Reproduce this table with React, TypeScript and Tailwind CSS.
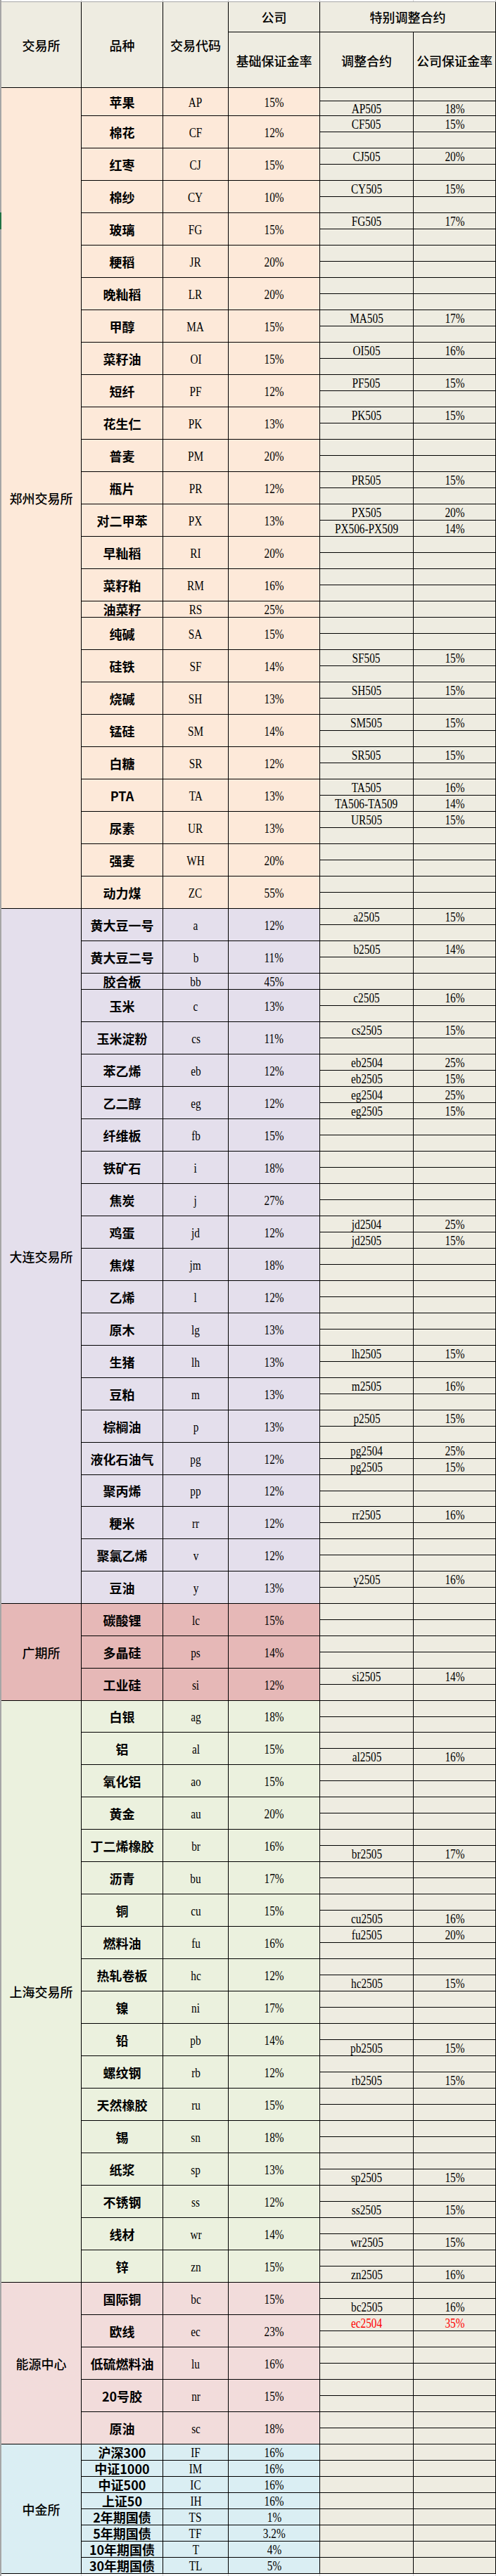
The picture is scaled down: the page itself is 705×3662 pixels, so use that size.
import React from "react";

type Sub = [string, string, boolean?] | null;
type Row = { n: string; c: string; r: string; s?: Sub[]; k?: "f" | "s" | "t" };
type Sec = { name: string; bg: string; rows: Row[] };

const LAT = "inline-block whitespace-nowrap font-['Liberation_Serif',serif] text-[18px] leading-none scale-x-[0.85]";
const CJK = "inline-block whitespace-nowrap font-['Noto_Sans_CJK_SC',sans-serif] text-[18px] leading-none";

const sections: Sec[] = [
  {
    name: "郑州交易所",
    bg: "bg-[#fde9d9]",
    rows: [
      { n: "苹果", c: "AP", r: "15%", k: "f", s: [null, ["AP505", "18%"]] },
      { n: "棉花", c: "CF", r: "12%", s: [["CF505", "15%"], null] },
      { n: "红枣", c: "CJ", r: "15%", s: [["CJ505", "20%"], null] },
      { n: "棉纱", c: "CY", r: "10%", s: [["CY505", "15%"], null] },
      { n: "玻璃", c: "FG", r: "15%", s: [["FG505", "17%"], null] },
      { n: "粳稻", c: "JR", r: "20%" },
      { n: "晚籼稻", c: "LR", r: "20%" },
      { n: "甲醇", c: "MA", r: "15%", s: [["MA505", "17%"], null] },
      { n: "菜籽油", c: "OI", r: "15%", s: [["OI505", "16%"], null] },
      { n: "短纤", c: "PF", r: "12%", s: [["PF505", "15%"], null] },
      { n: "花生仁", c: "PK", r: "13%", s: [["PK505", "15%"], null] },
      { n: "普麦", c: "PM", r: "20%" },
      { n: "瓶片", c: "PR", r: "12%", s: [["PR505", "15%"], null] },
      { n: "对二甲苯", c: "PX", r: "13%", s: [["PX505", "20%"], ["PX506-PX509", "14%"]] },
      { n: "早籼稻", c: "RI", r: "20%" },
      { n: "菜籽粕", c: "RM", r: "16%" },
      { n: "油菜籽", c: "RS", r: "25%", k: "s" },
      { n: "纯碱", c: "SA", r: "15%" },
      { n: "硅铁", c: "SF", r: "14%", s: [["SF505", "15%"], null] },
      { n: "烧碱", c: "SH", r: "13%", s: [["SH505", "15%"], null] },
      { n: "锰硅", c: "SM", r: "14%", s: [["SM505", "15%"], null] },
      { n: "白糖", c: "SR", r: "12%", s: [["SR505", "15%"], null] },
      { n: "PTA", c: "TA", r: "13%", s: [["TA505", "16%"], ["TA506-TA509", "14%"]] },
      { n: "尿素", c: "UR", r: "13%", s: [["UR505", "15%"], null] },
      { n: "强麦", c: "WH", r: "20%" },
      { n: "动力煤", c: "ZC", r: "55%" },
    ],
  },
  {
    name: "大连交易所",
    bg: "bg-[#e4dfec]",
    rows: [
      { n: "黄大豆一号", c: "a", r: "12%", s: [["a2505", "15%"], null] },
      { n: "黄大豆二号", c: "b", r: "11%", s: [["b2505", "14%"], null] },
      { n: "胶合板", c: "bb", r: "45%", k: "s" },
      { n: "玉米", c: "c", r: "13%", s: [["c2505", "16%"], null] },
      { n: "玉米淀粉", c: "cs", r: "11%", s: [["cs2505", "15%"], null] },
      { n: "苯乙烯", c: "eb", r: "12%", s: [["eb2504", "25%"], ["eb2505", "15%"]] },
      { n: "乙二醇", c: "eg", r: "12%", s: [["eg2504", "25%"], ["eg2505", "15%"]] },
      { n: "纤维板", c: "fb", r: "15%" },
      { n: "铁矿石", c: "i", r: "18%" },
      { n: "焦炭", c: "j", r: "27%" },
      { n: "鸡蛋", c: "jd", r: "12%", s: [["jd2504", "25%"], ["jd2505", "15%"]] },
      { n: "焦煤", c: "jm", r: "18%" },
      { n: "乙烯", c: "l", r: "12%" },
      { n: "原木", c: "lg", r: "13%" },
      { n: "生猪", c: "lh", r: "13%", s: [["lh2505", "15%"], null] },
      { n: "豆粕", c: "m", r: "13%", s: [["m2505", "16%"], null] },
      { n: "棕榈油", c: "p", r: "13%", s: [["p2505", "15%"], null] },
      { n: "液化石油气", c: "pg", r: "12%", s: [["pg2504", "25%"], ["pg2505", "15%"]] },
      { n: "聚丙烯", c: "pp", r: "12%", k: "t" },
      { n: "粳米", c: "rr", r: "12%", s: [["rr2505", "16%"], null] },
      { n: "聚氯乙烯", c: "v", r: "12%" },
      { n: "豆油", c: "y", r: "13%", s: [["y2505", "16%"], null] },
    ],
  },
  {
    name: "广期所",
    bg: "bg-[#e6b8b7]",
    rows: [
      { n: "碳酸锂", c: "lc", r: "15%" },
      { n: "多晶硅", c: "ps", r: "14%" },
      { n: "工业硅", c: "si", r: "12%", s: [["si2505", "14%"], null] },
    ],
  },
  {
    name: "上海交易所",
    bg: "bg-[#ebf1de]",
    rows: [
      { n: "白银", c: "ag", r: "18%", k: "t" },
      { n: "铝", c: "al", r: "15%", s: [null, ["al2505", "16%"]] },
      { n: "氧化铝", c: "ao", r: "15%" },
      { n: "黄金", c: "au", r: "20%" },
      { n: "丁二烯橡胶", c: "br", r: "16%", s: [null, ["br2505", "17%"]] },
      { n: "沥青", c: "bu", r: "17%" },
      { n: "铜", c: "cu", r: "15%", s: [null, ["cu2505", "16%"]] },
      { n: "燃料油", c: "fu", r: "16%", s: [["fu2505", "20%"], null] },
      { n: "热轧卷板", c: "hc", r: "12%", s: [null, ["hc2505", "15%"]] },
      { n: "镍", c: "ni", r: "17%" },
      { n: "铅", c: "pb", r: "14%", s: [null, ["pb2505", "15%"]] },
      { n: "螺纹钢", c: "rb", r: "12%", s: [null, ["rb2505", "15%"]] },
      { n: "天然橡胶", c: "ru", r: "15%" },
      { n: "锡", c: "sn", r: "18%" },
      { n: "纸浆", c: "sp", r: "13%", s: [null, ["sp2505", "15%"]] },
      { n: "不锈钢", c: "ss", r: "12%", s: [null, ["ss2505", "15%"]] },
      { n: "线材", c: "wr", r: "14%", s: [null, ["wr2505", "15%"]] },
      { n: "锌", c: "zn", r: "15%", s: [null, ["zn2505", "16%"]] },
    ],
  },
  {
    name: "能源中心",
    bg: "bg-[#f2dcdb]",
    rows: [
      { n: "国际铜", c: "bc", r: "15%", s: [null, ["bc2505", "16%"]] },
      { n: "欧线", c: "ec", r: "23%", s: [["ec2504", "35%", true], null] },
      { n: "低硫燃料油", c: "lu", r: "16%" },
      { n: "20号胶", c: "nr", r: "15%" },
      { n: "原油", c: "sc", r: "18%" },
    ],
  },
  {
    name: "中金所",
    bg: "bg-[#daeef3]",
    rows: [
      { n: "沪深300", c: "IF", r: "16%", k: "s" },
      { n: "中证1000", c: "IM", r: "16%", k: "s" },
      { n: "中证500", c: "IC", r: "16%", k: "s" },
      { n: "上证50", c: "IH", r: "16%", k: "s" },
      { n: "2年期国债", c: "TS", r: "1%", k: "s" },
      { n: "5年期国债", c: "TF", r: "3.2%", k: "s" },
      { n: "10年期国债", c: "T", r: "4%", k: "s" },
      { n: "30年期国债", c: "TL", r: "5%", k: "s" },
    ],
  },
];

function SubCells({ sub, cls }: { sub: Sub; cls: string }) {
  const red = sub && sub[2] ? "text-[#ff0000]" : "text-black";
  return (
    <div className={`flex ${cls}`}>
      <div className="w-[133px] border-r border-black flex items-center justify-center pt-[2px]">
        {sub ? <span className={`${LAT} ${red}`}>{sub[0]}</span> : null}
      </div>
      <div className="w-[117px] border-r border-black flex items-center justify-center pt-[2px]">
        {sub ? <span className={`${LAT} ${red}`}>{sub[1]}</span> : null}
      </div>
    </div>
  );
}

function RowView({ row, bg }: { row: Row; bg: string }) {
  const h =
    row.k === "f" ? "h-[40px]" : row.k === "s" ? "h-[23px]" : row.k === "t" ? "h-[45px]" : "h-[46px]";
  const subs: Sub[] = row.s ?? [null, null];
  return (
    <div className={`flex ${h} border-b border-black`}>
      <div className={`w-[116px] border-r border-black ${bg} flex items-center justify-center`}>
        <span className={`${CJK} font-bold text-black`}>{row.n}</span>
      </div>
      <div className={`w-[93px] border-r border-black ${bg} flex items-center justify-center pt-[2px]`}>
        <span className={`${LAT} text-black`}>{row.c}</span>
      </div>
      <div className={`w-[130px] border-r border-black ${bg} flex items-center justify-center pt-[2px]`}>
        <span className={`${LAT} text-black`}>{row.r}</span>
      </div>
      <div className="w-[250px] flex flex-col bg-[#eeece1]">
        {row.k === "s" ? (
          <SubCells sub={subs[0]} cls="flex-1" />
        ) : (
          <>
            <SubCells sub={subs[0]} cls={`${row.k === "f" ? "h-[20px]" : "h-[23px]"} border-b border-black`} />
            <SubCells sub={subs[1] ?? null} cls="flex-1" />
          </>
        )}
      </div>
    </div>
  );
}

function Section({ sec }: { sec: Sec }) {
  return (
    <div className="flex">
      <div className={`w-[114px] shrink-0 border-r border-b border-black ${sec.bg} flex items-center justify-center`}>
        <span className={`${CJK} font-medium text-black`}>{sec.name}</span>
      </div>
      <div className="flex flex-col">
        {sec.rows.map((r, i) => (
          <RowView key={i} row={r} bg={sec.bg} />
        ))}
      </div>
    </div>
  );
}

function GridStrip({ h }: { h: string }) {
  return (
    <div className={`flex ${h} bg-white`}>
      <div className="w-[114px] border-r border-[#d4d4d4]" />
      <div className="w-[116px] border-r border-[#d4d4d4]" />
      <div className="w-[93px] border-r border-[#d4d4d4]" />
      <div className="w-[130px] border-r border-[#d4d4d4]" />
      <div className="w-[133px] border-r border-[#d4d4d4]" />
      <div className="w-[117px] border-r border-[#d4d4d4]" />
    </div>
  );
}

export default function App() {
  const head = `${CJK} font-medium text-black`;
  return (
    <div className="relative w-[705px] h-[3662px] bg-white overflow-hidden">
      <div className="w-[705px] border-l-2 border-[#a6a6a6]">
        <GridStrip h="h-[2px]" />
        <div className="flex h-[123px] border-t border-b border-t-[#a6a6a6] border-b-black bg-[#eeece1]">
          <div className="w-[114px] border-r border-black flex items-center justify-center">
            <span className={head}>交易所</span>
          </div>
          <div className="w-[116px] border-r border-black flex items-center justify-center">
            <span className={head}>品种</span>
          </div>
          <div className="w-[93px] border-r border-black flex items-center justify-center">
            <span className={head}>交易代码</span>
          </div>
          <div className="w-[380px] flex flex-col">
            <div className="flex h-[43px] border-b border-black">
              <div className="w-[130px] border-r border-black flex items-center justify-center">
                <span className={head}>公司</span>
              </div>
              <div className="w-[250px] border-r border-black flex items-center justify-center">
                <span className={head}>特别调整合约</span>
              </div>
            </div>
            <div className="flex flex-1">
              <div className="w-[130px] border-r border-black flex items-center justify-center pt-[2px]">
                <span className={head}>基础保证金率</span>
              </div>
              <div className="w-[133px] border-r border-black flex items-center justify-center pt-[2px]">
                <span className={head}>调整合约</span>
              </div>
              <div className="w-[117px] border-r border-black flex items-center justify-center pt-[2px]">
                <span className={head}>公司保证金率</span>
              </div>
            </div>
          </div>
        </div>
        {sections.map((s, i) => (
          <Section key={i} sec={s} />
        ))}
        <GridStrip h="h-[3px]" />
      </div>
      <div className="absolute left-0 top-[302px] w-[2px] h-[24px] bg-[#217346]" />
    </div>
  );
}
